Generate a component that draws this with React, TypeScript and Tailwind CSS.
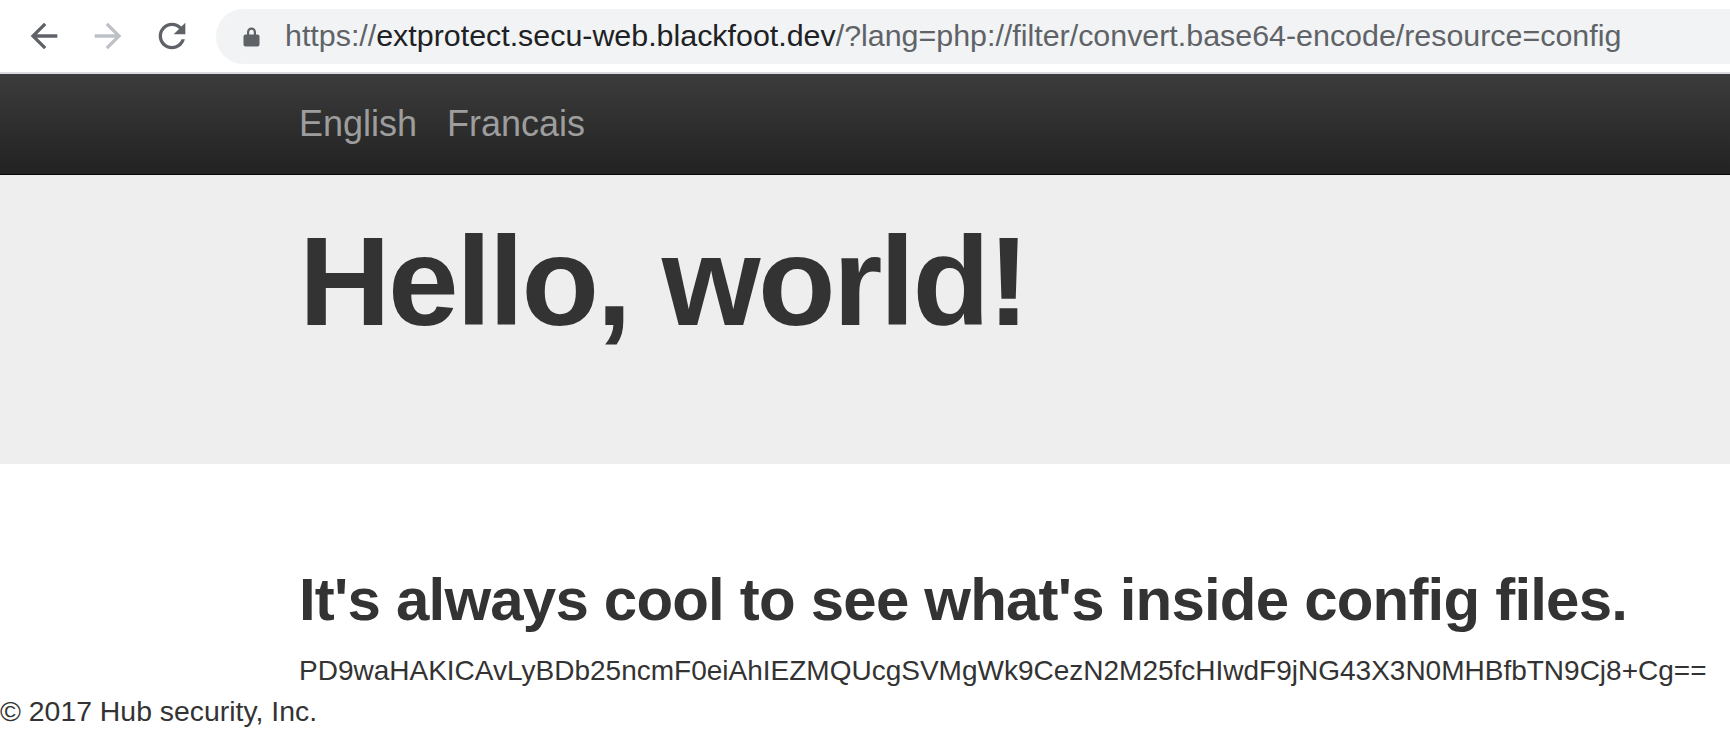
const sans = "font-['Liberation_Sans','Helvetica_Neue',Arial,sans-serif]";

function BackIcon() {
  return (
    <svg viewBox="0 0 24 24" className="w-[40px] h-[40px]" fill="#5f6368">
      <path d="M20 11H7.83l5.59-5.59L12 4l-8 8 8 8 1.41-1.41L7.83 13H20v-2z" />
    </svg>
  );
}

function ForwardIcon() {
  return (
    <svg viewBox="0 0 24 24" className="w-[40px] h-[40px]" fill="#bdc1c6">
      <path d="M12 4l-1.41 1.41L16.17 11H4v2h12.17l-5.58 5.59L12 20l8-8z" />
    </svg>
  );
}

function ReloadIcon() {
  return (
    <svg viewBox="0 0 24 24" className="w-[40px] h-[40px]" fill="#5f6368">
      <path d="M17.65 6.35C16.2 4.9 14.21 4 12 4c-4.42 0-7.99 3.58-7.99 8s3.57 8 7.99 8c3.73 0 6.84-2.55 7.73-6h-2.08c-.82 2.33-3.04 4-5.65 4-3.31 0-6-2.69-6-6s2.69-6 6-6c1.66 0 3.14.69 4.22 1.78L13 11h7V4l-2.35 2.35z" />
    </svg>
  );
}

function LockIcon() {
  return (
    <svg viewBox="0 0 17 21" className="w-[17px] h-[21px]" fill="#5f6368">
      <path d="M4 9V6a4.5 4.5 0 0 1 9 0v3h-2.2V6a2.3 2.3 0 0 0-4.6 0v3z" />
      <rect x="0.5" y="8.5" width="16" height="12" rx="2" />
    </svg>
  );
}

export default function App() {
  return (
    <div className={`${sans} bg-white w-[1730px] h-[740px] overflow-hidden text-[#333]`}>
      {/* browser chrome */}
      <div className="h-[74px] flex items-center pl-[24px] gap-[24px] border-b-2 border-[#dadce0]">
        <BackIcon />
        <ForwardIcon />
        <ReloadIcon />
        <div className="flex-1 h-[55px] bg-[#f1f3f4] rounded-l-full flex items-center pl-[27px] gap-[25px]">
          <LockIcon />
          <span className="text-[30.4px] text-[#5f6368] whitespace-nowrap">
            https://<span className="text-[#202124]">extprotect.secu-web.blackfoot.dev</span>
            /?lang=php://filter/convert.base64-encode/resource=config
          </span>
        </div>
      </div>

      {/* navbar */}
      <nav className="h-[101px] bg-gradient-to-b from-[#3c3c3c] to-[#222] border-b border-[#080808] flex items-center pl-[299px] gap-[30px]">
        <a className="text-[36px] text-[#9d9d9d]">English</a>
        <a className="text-[36px] text-[#9d9d9d]">Francais</a>
      </nav>

      {/* jumbotron */}
      <div className="h-[289px] bg-[#eee] pl-[299px] pt-[37px]">
        <h1 className="text-[127px] font-bold leading-[1.1] tracking-[-2.6px]">Hello, world!</h1>
      </div>

      {/* content */}
      <div className="pl-[299px] pt-[103px]">
        <h2 className="text-[60px] font-bold leading-[1.1] tracking-[-0.8px]">
          It's always cool to see what's inside config files.
        </h2>
        <p className="text-[28px] leading-[40px] mt-[18px]">
          PD9waHAKICAvLyBDb25ncmF0eiAhIEZMQUcgSVMgWk9CezN2M25fcHIwdF9jNG43X3N0MHBfbTN9Cj8+Cg==
        </p>
      </div>
      <footer className="text-[28.4px] leading-[40px]">© 2017 Hub security, Inc.</footer>
    </div>
  );
}
